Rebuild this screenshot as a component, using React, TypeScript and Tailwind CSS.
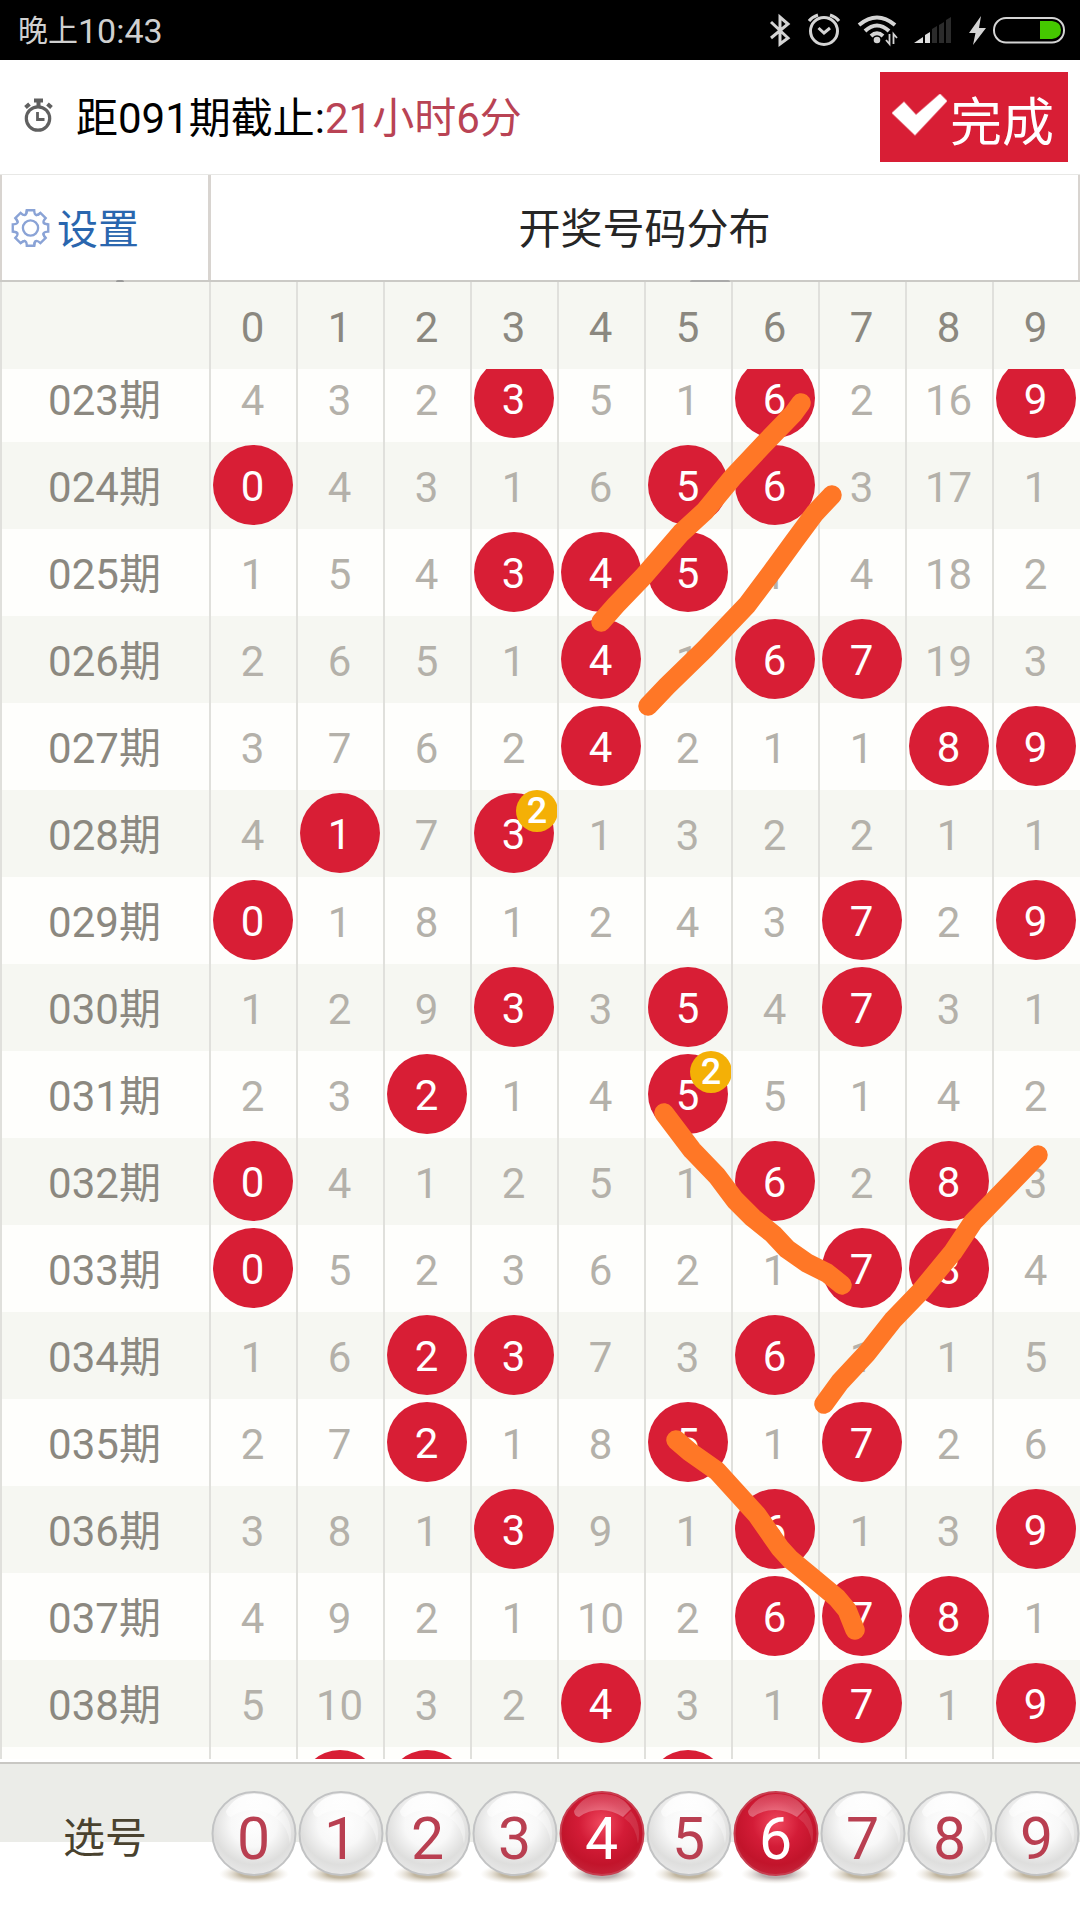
import React from "react";

const rows: [string, string][] = [
  ["023", "4 3 2 *3 5 1 *6 2 16 *9"],
  ["024", "*0 4 3 1 6 *5 *6 3 17 1"],
  ["025", "1 5 4 *3 *4 *5 1 4 18 2"],
  ["026", "2 6 5 1 *4 1 *6 *7 19 3"],
  ["027", "3 7 6 2 *4 2 1 1 *8 *9"],
  ["028", "4 *1 7 *3+2 1 3 2 2 1 1"],
  ["029", "*0 1 8 1 2 4 3 *7 2 *9"],
  ["030", "1 2 9 *3 3 *5 4 *7 3 1"],
  ["031", "2 3 *2 1 4 *5+2 5 1 4 2"],
  ["032", "*0 4 1 2 5 1 *6 2 *8 3"],
  ["033", "*0 5 2 3 6 2 1 *7 *8 4"],
  ["034", "1 6 *2 *3 7 3 *6 1 1 5"],
  ["035", "2 7 *2 1 8 *5 1 *7 2 6"],
  ["036", "3 8 1 *3 9 1 *6 1 3 *9"],
  ["037", "4 9 2 1 10 2 *6 *7 *8 1"],
  ["038", "5 10 3 2 *4 3 1 *7 1 *9"],
];

// Columns hit in the draw that peeks out at the bottom of the list.
const peekHits = [1, 2, 5];

const digits = [0, 1, 2, 3, 4, 5, 6, 7, 8, 9];
const picked = [4, 6];

const strokes = [
  "801,403 793,414 764,444 733,477 705,511 681,533 643,577 616,605 601,622",
  "832,495 815,513 795,540 771,573 747,605 705,649 667,686 648,706",
  "664,1113 692,1150 717,1176 735,1200 753,1218 773,1234 787,1249 807,1263 827,1273 842,1285",
  "1038,1155 1007,1187 973,1222 953,1252 920,1292 893,1320 867,1353 840,1382 824,1404",
  "676,1440 690,1452 717,1471 737,1493 757,1515 780,1548 790,1559 813,1578 837,1598 847,1610 855,1630",
];

function StatusIcons() {
  return (
    <svg width="310" height="50" viewBox="760 5 310 50" fill="none" stroke="#d4d4d4" strokeWidth="3">
      <path d="M771 22 L788 38 L780 44 V17 L788 24 L771 38" />
      <circle cx="824" cy="31" r="13.500" />
      <path d="M818.500 28 L824 33 L830 28" />
      <path d="M809 21 Q812 17 818 15 M830 15 Q836 17 839 21" />
      <path d="M859 25 Q877 10 895 25 M865 31 Q877 20 889 31 M871 36 Q877 30.500 883 36" strokeWidth="4" />
      <circle cx="877" cy="40" r="3.300" fill="#d4d4d4" stroke="none" />
      <path d="M889.500 34 V44 L886 40 M893.500 44 V34 L897 38" strokeWidth="1.800" />
      <g stroke="none">
        <path d="M914 43 L923 37 V43Z M925 35 L930 32 V43 H925Z" fill="#dedede" />
        <path d="M932 29 L937 26 V43 H932Z M939 25 L944 22 V43 H939Z M946 20 L951 17 V43 H946Z" fill="#2b2b2b" />
        <path d="M981 16 L969 33 H975.500 L973 45 L986 28 H979Z" fill="#d4d4d4" />
      </g>
      <rect x="994" y="18" width="70" height="24.500" rx="12" strokeWidth="2" />
      <path d="M1040 21 H1052 Q1061 22 1061 30 Q1061 38 1052 39 H1040Z" fill="#45c800" stroke="none" />
    </svg>
  );
}

function Stopwatch() {
  return (
    <svg className="absolute left-6 top-[38px]" width="29" height="34" viewBox="0 0 29 34" fill="none" stroke="#606060" strokeWidth="3.2">
      <circle cx="14" cy="20.500" r="11.700" />
      <path d="M10 2.500 H19 M14.500 3 V9" strokeWidth="4" />
      <path d="M1.500 9.500 L5.500 6 M23.500 6 L27.500 9.500" strokeWidth="4" />
      <path d="M13.500 14 V21.500 H20.500" strokeWidth="2.800" />
    </svg>
  );
}

function Gear() {
  return (
    <svg className="mr-[7px] shrink-0" width="39" height="40" viewBox="-20 -20 40 40" fill="none" stroke="#8aa3d6" strokeWidth="2.4">
      {digits.slice(0, 8).map((i) => (
        <path key={i} transform={`rotate(${i * 45})`} d="M-5.600 -13.400 Q-3.900 -14 -3.800 -18.200 H3.800 Q3.900 -14 5.600 -13.400 Q7.500 -13 10.200 -15.600" />
      ))}
      <circle r="7.800" />
    </svg>
  );
}

function Cell({ value }: { value: string }) {
  const hit = value.startsWith("*");
  const [num, badge] = value.replace("*", "").split("+");
  return (
    <div className="relative flex h-[87px] w-[87px] shrink-0 items-center justify-center border-l-2 border-[#e0e0dc] pr-[2px]">
      {hit ? (
        <span className="mb-px flex h-20 w-20 shrink-0 items-center justify-center rounded-full bg-[#d81e35] pt-[4px] text-white">{num}</span>
      ) : (
        <span className="pt-[4px] text-[#b4b1aa]">{num}</span>
      )}
      {badge && (
        <span className="absolute -right-px top-0 flex h-[42px] w-[42px] items-center justify-center rounded-full bg-[#f4b006] text-[36px] font-medium leading-none text-white">
          {badge}
        </span>
      )}
    </div>
  );
}

function Ball({ n }: { n: number }) {
  const on = picked.includes(n);
  const id = `ball${n}`;
  return (
    <div className="relative h-[100px] w-[87px] shrink-0">
      <svg className="absolute inset-0" width="87" height="100" viewBox="0 0 87 100">
        <defs>
          <radialGradient id={`${id}b`} cx="0.5" cy="0.38" r="0.62">
            <stop offset="0" stopColor={on ? "#f0495f" : "#ffffff"} />
            <stop offset="0.45" stopColor={on ? "#d31c37" : "#f8f8f8"} />
            <stop offset="0.8" stopColor={on ? "#c2142b" : "#dededd"} />
            <stop offset="1" stopColor={on ? "#c42238" : "#e8e8e8"} />
          </radialGradient>
          <linearGradient id={`${id}h`} x1="0" y1="0" x2="0" y2="1">
            <stop offset="0" stopColor="#fff" stopOpacity={on ? 0.15 : 0.95} />
            <stop offset="1" stopColor="#fff" stopOpacity={on ? 0.32 : 0.5} />
          </linearGradient>
          <radialGradient id={`${id}s`}>
            <stop offset="0.4" stopColor={on ? "#b0a4a4" : "#b9ad94"} stopOpacity="0.9" />
            <stop offset="1" stopColor="#e3dccf" stopOpacity="0" />
          </radialGradient>
        </defs>
        <ellipse cx="44" cy="84" rx="35" ry="10" fill={`url(#${id}s)`} />
        <circle cx="44" cy="43.500" r="41.500" fill={`url(#${id}b)`} stroke={on ? "#c83e50" : "#c2c3c4"} strokeWidth="2" />
        <path d="M16 21 Q26 4 44 4 Q64 4 73 19 L65 27 Q54 20 43 20 Q30 20 21 27 Q16 26 16 21Z" fill={`url(#${id}h)`} />
        <path d="M66 28 L73 21 Q84 34 80 54 Q78 36 66 28Z" fill="#fff" fillOpacity={on ? 0.11 : 0.35} />
      </svg>
      <span className={on ? "relative flex h-[89px] items-center justify-center pt-[7px] text-[59px] leading-none text-white" : "relative flex h-[89px] items-center justify-center pt-[7px] text-[59px] leading-none text-[#b93f51]"}>
        {n}
      </span>
    </div>
  );
}

export default function App() {
  return (
    <div className="relative flex h-[1920px] w-[1080px] flex-col overflow-hidden bg-white font-[Roboto,'Noto_Sans_CJK_SC',sans-serif] text-[42px] leading-none">
      <header className="flex h-[60px] shrink-0 items-center justify-between bg-black pl-[18px] pr-[10px] text-[#d0d0d0]">
        <div className="flex items-center pt-[2px] text-[34px]">
          <span className="text-[30px]">晚上</span>
          <span>10:43</span>
        </div>
        <StatusIcons />
      </header>

      <section className="relative flex h-[114px] shrink-0 items-center justify-between pl-[76px] pr-3">
        <Stopwatch />
        <div className="whitespace-nowrap pt-[4px] text-black">
          距091期截止:<span className="text-[#b94354]">21小时6分</span>
        </div>
        <button className="flex h-[90px] w-[188px] items-center bg-[#d81e35] pl-[12px] text-[52px] leading-none text-white">
          <svg className="mb-[4px] mr-[3px] shrink-0" width="55" height="42" viewBox="0 0 55 42">
            <path d="M0 19 L12 8 L24 21 L48 0 L55 7 L23 41Z" fill="#fff" stroke="#fff" strokeOpacity="0.35" strokeWidth="1.500" />
          </svg>
          <span className="whitespace-nowrap pt-[14px]">完成</span>
        </button>
      </section>

      <section className="relative flex h-[108px] shrink-0 border-b-2 border-t border-b-[#cbcac6] border-t-[#e8e8e6]">
        <div className="flex w-[211px] items-center border-l-2 border-r-[3px] border-[#d8d4d0] pl-[9px] text-[41px] text-[#2a66ae]">
          <Gear />
          <span className="whitespace-nowrap pt-[5px]">设置</span>
        </div>
        <div className="flex flex-1 items-center justify-center border-r-2 border-[#d8d4d0] pt-[5px] text-[#262626]">开奖号码分布</div>
        <span className="absolute -bottom-0.5 left-[116px] h-0.5 w-2 rounded-t-full bg-[#999]" />
        <span className="absolute -bottom-0.5 left-[690px] h-0.5 w-10 rounded-t-full bg-[#aaa]" />
      </section>

      <div className="flex h-[87px] shrink-0 border-l-2 border-[#e0e0dc] bg-[#f6f7f2] text-[#8b8880]">
        <div className="w-[207px] shrink-0" />
        {digits.map((n) => (
          <div key={n} className="flex w-[87px] shrink-0 items-center justify-center border-l-2 border-[#e0e0dc] pr-[2px] pt-[5px]">{n}</div>
        ))}
      </div>

      <main className="flex h-[1390px] shrink-0 flex-col justify-end overflow-hidden">
        {rows.map(([issue, cells], r) => (
          <div key={issue} className={r % 2 ? "flex h-[87px] shrink-0 border-l-2 border-[#e0e0dc] bg-[#f6f7f2]" : "flex h-[87px] shrink-0 border-l-2 border-[#e0e0dc] bg-[#fefefc]"}>
            <div className="flex w-[207px] shrink-0 items-center justify-center pr-[2px] pt-[4px] text-[#8b8880]">{issue}期</div>
            {cells.split(" ").map((c, i) => (
              <Cell key={i} value={c} />
            ))}
          </div>
        ))}
        <div className="flex h-[12px] shrink-0 overflow-hidden border-l-2 border-[#e0e0dc] bg-[#fefefc]">
          <div className="w-[207px] shrink-0" />
          {digits.map((n) => (
            <div key={n} className="flex h-[87px] w-[87px] shrink-0 justify-center border-l-2 border-[#e0e0dc] pr-[2px] pt-[3px]">
              {peekHits.includes(n) && <span className="h-20 w-20 shrink-0 rounded-full bg-[#d81e35]" />}
            </div>
          ))}
        </div>
      </main>

      <footer className="relative mt-[3px] flex h-[158px] shrink-0 border-t-2 border-[#c8c7c3] bg-[linear-gradient(#ebece8_78px,#fff_78px)]">
        <div className="flex h-[150px] w-[210px] shrink-0 items-center pl-[63px] text-[#49422f]">
          <span className="whitespace-nowrap">选号</span>
        </div>
        <div className="flex pt-[26px]">
          {digits.map((n) => (
            <Ball key={n} n={n} />
          ))}
        </div>
      </footer>

      <svg className="pointer-events-none absolute inset-0" width="1080" height="1920" fill="none" stroke="#ff7726" strokeWidth="19.500" strokeLinecap="round" strokeLinejoin="round">
        {strokes.map((p) => (
          <polyline key={p} points={p} />
        ))}
      </svg>
    </div>
  );
}
